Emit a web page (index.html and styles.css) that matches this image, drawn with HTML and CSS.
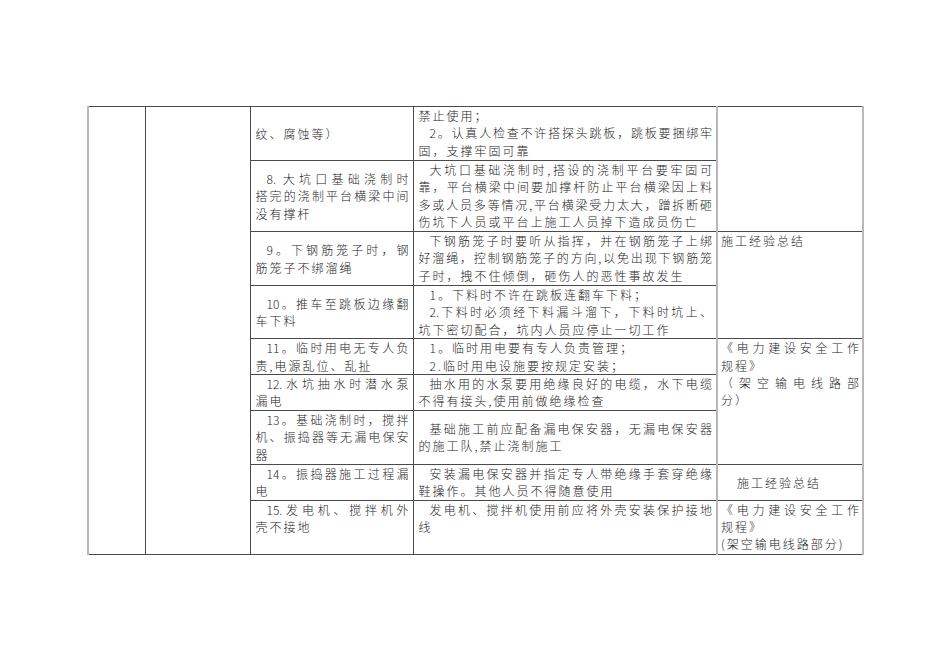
FILE: index.html
```html
<!DOCTYPE html>
<html lang="zh">
<head>
<meta charset="utf-8">
<link rel="stylesheet" href="styles.css">
</head>
<body>
<div class="page">
<table class="sheet">
  <colgroup>
    <col class="c1"><col class="c2"><col class="c3"><col class="c4"><col class="c5">
  </colgroup>
  <tr class="r1">
    <td class="blank lb" rowspan="9"></td>
    <td class="blank" rowspan="9"></td>
    <td class="mid"><div>纹、腐蚀等）</div></td>
    <td class="top"><div>禁止使用；</div><div class="j in">2。认真人检查不许搭探头跳板，跳板要捆绑牢</div><div>固，支撑牢固可靠</div></td>
    <td class="last top" rowspan="2"></td>
  </tr>
  <tr class="r2">
    <td class="mid"><div class="j in">8. 大坑口基础浇制时</div><div class="j">搭完的浇制平台横梁中间</div><div>没有撑杆</div></td>
    <td class="top"><div class="j in">大坑口基础浇制时,搭设的浇制平台要牢固可</div><div class="j">靠，平台横梁中间要加撑杆防止平台横梁因上料</div><div class="j">多或人员多等情况,平台横梁受力太大，蹭拆断砸</div><div>伤坑下人员或平台上施工人员掉下造成员伤亡</div></td>
  </tr>
  <tr class="r3">
    <td class="mid"><div class="j in">9。下钢筋笼子时，钢</div><div>筋笼子不绑溜绳</div></td>
    <td class="top"><div class="j in">下钢筋笼子时要听从指挥，并在钢筋笼子上绑</div><div class="j">好溜绳，控制钢筋笼子的方向,以免出现下钢筋笼</div><div>子时，拽不住倾倒，砸伤人的恶性事故发生</div></td>
    <td class="last top src" rowspan="2"><div>施工经验总结</div></td>
  </tr>
  <tr class="r4">
    <td class="mid"><div class="j in">10。推车至跳板边缘翻</div><div>车下料</div></td>
    <td class="top"><div class="in">1。下料时不许在跳板连翻车下料；</div><div class="j in">2.下料时必须经下料漏斗溜下，下料时坑上、</div><div>坑下密切配合，坑内人员应停止一切工作</div></td>
  </tr>
  <tr class="r5">
    <td class="top"><div class="j in">11。临时用电无专人负</div><div>责,电源乱位、乱扯</div></td>
    <td class="top"><div class="in">1。临时用电要有专人负责管理；</div><div class="in">2.临时用电设施要按规定安装；</div></td>
    <td class="last top src" rowspan="3"><div class="j">《电力建设安全工作</div><div>规程》</div><div class="j">（架空输电线路部</div><div>分）</div></td>
  </tr>
  <tr class="r6">
    <td class="top"><div class="j in">12.水坑抽水时潜水泵</div><div>漏电</div></td>
    <td class="top"><div class="j in">抽水用的水泵要用绝缘良好的电缆，水下电缆</div><div>不得有接头,使用前做绝缘检查</div></td>
  </tr>
  <tr class="r7">
    <td class="top"><div class="j in">13。基础浇制时，搅拌</div><div class="j">机、振捣器等无漏电保安</div><div>器</div></td>
    <td class="mid"><div class="j in">基础施工前应配备漏电保安器，无漏电保安器</div><div>的施工队,禁止浇制施工</div></td>
  </tr>
  <tr class="r8">
    <td class="top"><div class="j in">14。振捣器施工过程漏</div><div>电</div></td>
    <td class="top"><div class="j in">安装漏电保安器并指定专人带绝缘手套穿绝缘</div><div>鞋操作。其他人员不得随意使用</div></td>
    <td class="last mid src"><div class="in">施工经验总结</div></td>
  </tr>
  <tr class="r9">
    <td class="top"><div class="j in">15.发电机、搅拌机外</div><div>壳不接地</div></td>
    <td class="top"><div class="j in">发电机、搅拌机使用前应将外壳安装保护接地</div><div>线</div></td>
    <td class="last top src"><div class="j">《电力建设安全工作</div><div>规程》</div><div>(架空输电线路部分)</div></td>
  </tr>
</table>
</div>
</body>
</html>
```
FILE: styles.css
```css
html, body {
  margin: 0;
  padding: 0;
  background: #ffffff;
}

.page {
  width: 950px;
  height: 672px;
  padding: 106px 0 0 87px;
  box-sizing: border-box;
}

.sheet {
  border-collapse: collapse;
  table-layout: fixed;
  width: 775px;
  font-family: "Noto Sans CJK SC", "Noto Sans", sans-serif;
  font-size: 12px;
  font-weight: 300;
  letter-spacing: 2px;
  color: #262626;
  line-height: 17.4px;
}

.c1 { width: 57px; }
.c2 { width: 105px; }
.c3 { width: 163px; }
.c4 { width: 304px; }
.c5 { width: 146px; }

.sheet td {
  border: 1px solid #4a4a4a;
  padding: 0 4px 0 5px;
  overflow: hidden;
  white-space: nowrap;
}

.sheet td.lb {
  border-left: 2px solid #b8b8b8;
}

.sheet td.last {
  border-left: 2px solid #b8b8b8;
  border-right: 2px solid #b8b8b8;
  padding: 0 3px 0 3px;
}

.top { vertical-align: top; }
.mid { vertical-align: middle; }

.j {
  text-align: justify;
  text-align-last: justify;
  letter-spacing: 0;
}

.in { padding-left: 11px; }

.src .in { padding-left: 16px; }

.r1 { height: 54px; }
.r2 { height: 71px; }
.r3 { height: 54px; }
.r4 { height: 52px; }
.r5 { height: 34px; }
.r6 { height: 35px; }
.r7 { height: 54px; }
.r8 { height: 34px; }
.r9 { height: 54px; }
```
